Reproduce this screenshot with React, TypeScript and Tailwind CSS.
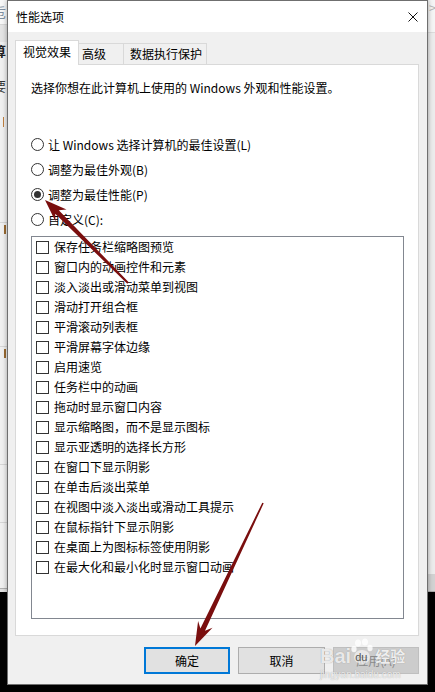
import React from "react";

const items = [
  "保存任务栏缩略图预览",
  "窗口内的动画控件和元素",
  "淡入淡出或滑动菜单到视图",
  "滑动打开组合框",
  "平滑滚动列表框",
  "平滑屏幕字体边缘",
  "启用速览",
  "任务栏中的动画",
  "拖动时显示窗口内容",
  "显示缩略图，而不是显示图标",
  "显示亚透明的选择长方形",
  "在窗口下显示阴影",
  "在单击后淡出菜单",
  "在视图中淡入淡出或滑动工具提示",
  "在鼠标指针下显示阴影",
  "在桌面上为图标标签使用阴影",
  "在最大化和最小化时显示窗口动画",
];

const radios = [
  { label: "让 Windows 选择计算机的最佳设置(L)", checked: false },
  { label: "调整为最佳外观(B)", checked: false },
  { label: "调整为最佳性能(P)", checked: true },
  { label: "自定义(C):", checked: false },
];

function Radio({ checked }: { checked: boolean }) {
  return (
    <div className="w-[13px] h-[13px] rounded-full border border-[#333333] bg-white flex items-center justify-center shrink-0">
      {checked && <div className="w-[7px] h-[7px] rounded-full bg-[#333333]" />}
    </div>
  );
}

function LeftStrip() {
  return (
    <div className="w-[7px] h-[592px] bg-[#f0f0f0] overflow-hidden flex flex-col text-[13px] leading-[16px]">
      <div className="h-[24px] bg-[#f7f7f7] flex items-center">
        <span className="-ml-[7px] text-[#7f8fa0]">卮</span>
      </div>
      <div className="h-px bg-[#d6d6d6]" />
      <div className="h-[17px] bg-[#e4e4e4]" />
      <div className="h-[18px] flex items-center">
        <span className="-ml-[7px] font-bold text-[#222]">算</span>
      </div>
      <div className="h-[18px]" />
      <div className="h-[16px] flex items-center">
        <span className="-ml-[7px] text-[#333]">要</span>
      </div>
      <div className="h-[22px]" />
      <div className="h-[12px] flex items-center">
        <span className="ml-[3px] w-px h-[10px] bg-[#c08040]" />
      </div>
      <div className="h-[94px]" />
      <div className="h-px bg-[#d6d6d6]" />
      <div className="h-[12px] flex items-center">
        <span className="ml-[4px] w-[2px] h-[9px] bg-[#9a6a30]" />
      </div>
      <div className="h-[111px]" />
      <div className="h-px bg-[#d6d6d6]" />
      <div className="h-[12px] flex items-center">
        <span className="ml-[4px] w-[2px] h-[9px] bg-[#9a6a30]" />
      </div>
      <div className="h-[105px]" />
      <div className="h-px bg-[#d6d6d6]" />
      <div className="h-[57px]" />
      <div className="h-px bg-[#d6d6d6]" />
      <div className="flex-1" />
      <div className="h-px bg-[#b0b0b0]" />
      <div className="h-[3px] bg-[#e0e0e0]" />
    </div>
  );
}

function RightStrip() {
  return (
    <div className="w-[7px] h-[592px] bg-[#ececec] overflow-hidden flex flex-col text-[13px] leading-[16px]">
      <div className="h-[32px] bg-[#f5f5f5] flex items-start">
        <span className="ml-[1px] text-[#b5b5b5]">&gt;</span>
      </div>
      <div className="h-px bg-[#dcdcdc]" />
      <div className="flex-1" />
      <div className="h-[17px] bg-[#d2d2d2]" />
      <div className="h-px bg-[#a8a8a8]" />
    </div>
  );
}

function Dialog() {
  return (
    <div className="relative z-10 w-[421px] h-[685px] border border-[#6f6f6f] bg-[#f0f0f0] flex flex-col shadow-[0_0_5px_rgba(0,0,0,0.35)]">
      {/* Title bar */}
      <div className="h-[31px] bg-white flex items-center justify-between pl-[8px] pr-[9px] shrink-0">
        <span className="leading-[16px]">性能选项</span>
        <svg width="10" height="10" viewBox="0 0 10 10" className="block">
          <path d="M0.5 0.5 L9.5 9.5 M9.5 0.5 L0.5 9.5" stroke="#111" strokeWidth="1" fill="none" />
        </svg>
      </div>

      {/* Body */}
      <div className="flex-1 flex flex-col pt-[8px] pl-[7px] pr-[8px] pb-[10px]">
        {/* Tabs */}
        <div className="h-[24px] flex items-end shrink-0">
          <div className="relative z-10 h-[25px] w-[64px] -mb-px bg-white border border-[#d9d9d9] border-b-0 flex items-center pl-[7px] pb-[2px]">
            视觉效果
          </div>
          <div className="h-[21px] w-[45px] border-t border-r border-[#d9d9d9] flex items-center pl-[3px]">
            高级
          </div>
          <div className="h-[21px] w-[83px] border-t border-r border-[#d9d9d9] flex items-center pl-[6px]">
            数据执行保护
          </div>
        </div>

        {/* Panel */}
        <div className="h-[572px] bg-white border border-[#d9d9d9] flex flex-col pl-[15px] shrink-0">
          <div className="pt-[15px] leading-[16px]">选择你想在此计算机上使用的 Windows 外观和性能设置。</div>

          <div className="mt-[36px] flex flex-col">
            {radios.map((r) => (
              <div key={r.label} className="h-[25px] flex items-center gap-[4px]">
                <Radio checked={r.checked} />
                <span className="leading-[16px]">{r.label}</span>
              </div>
            ))}
          </div>

          <div className="mt-[4px] w-[373px] h-[383px] border border-[#828790] bg-white flex flex-col pl-[4px]">
            {items.map((t) => (
              <div key={t} className="h-[20px] flex items-center gap-[5px]">
                <div className="w-[13px] h-[13px] border border-[#333333] bg-white shrink-0" />
                <span className="leading-[16px]">{t}</span>
              </div>
            ))}
          </div>
        </div>

        {/* Buttons */}
        <div className="mt-[11px] flex justify-end gap-[8px] shrink-0">
          <div className="w-[86px] h-[27px] bg-[#e1e1e1] border-2 border-[#0078d7] flex items-center justify-center">
            确定
          </div>
          <div className="w-[87px] h-[27px] bg-[#e1e1e1] border border-[#adadad] flex items-center justify-center">
            取消
          </div>
          <div className="w-[86px] h-[27px] bg-[#cccccc] border border-[#bfbfbf] flex items-center justify-center text-[#8a8a8a]">
            应用(A)
          </div>
        </div>
      </div>
    </div>
  );
}

function Arrows() {
  return (
    <svg className="absolute inset-0 z-20 pointer-events-none" width="435" height="692" viewBox="0 0 435 692">
      <polygon
        points="45,200 66.5,209.5 58.8,210.2 128.7,282.3 127.3,283.7 55.2,213.8 55.5,221.5"
        fill="#7a0e0e"
      />
      <polygon
        points="195,646 212.5,627.7 205,630.8 263.7,503.3 262.3,502.7 200.4,628.6 198.1,620.9"
        fill="#7a0e0e"
      />
    </svg>
  );
}

function Watermark() {
  return (
    <div className="absolute z-30 left-[320px] top-[638px] w-[95px] h-[44px] pointer-events-none flex flex-col">
      <div className="h-[28px] flex items-end">
        <span className="text-[20px] leading-[20px] font-bold text-white/80 font-['Liberation_Sans',sans-serif] [text-shadow:0_0_1px_#8a8a8a]">
          Bai
        </span>
        <div className="relative w-[24px] h-[28px]">
          <svg width="24" height="28" viewBox="0 0 24 28" className="absolute inset-0">
            <ellipse cx="7" cy="5" rx="3" ry="3.6" fill="white" fillOpacity="0.8" />
            <ellipse cx="14" cy="4" rx="3" ry="3.6" fill="white" fillOpacity="0.8" />
            <ellipse cx="3" cy="11" rx="2.6" ry="3.2" fill="white" fillOpacity="0.8" />
            <ellipse cx="19" cy="10" rx="2.6" ry="3.2" fill="white" fillOpacity="0.8" />
            <ellipse cx="11" cy="19" rx="8" ry="7" fill="white" fillOpacity="0.55" />
          </svg>
          <span className="absolute left-[4px] top-[12px] text-[11px] leading-[14px] text-[#555] font-['Liberation_Sans',sans-serif]">
            du
          </span>
        </div>
        <span className="text-[15px] leading-[20px] text-white/85 font-bold [text-shadow:0_0_1px_#8a8a8a]">经验</span>
      </div>
      <div className="mt-[3px] text-[10px] leading-[11px] text-white/75 font-['Liberation_Sans',sans-serif] [text-shadow:0_0_1px_#9a9a9a]">
        jingyan.baidu.com
      </div>
    </div>
  );
}

export default function App() {
  return (
    <div className="relative w-[435px] h-[692px] overflow-hidden bg-black text-[12px] text-black font-['Microsoft_YaHei','Noto_Sans_CJK_SC',sans-serif]">
      <div className="flex items-start">
        <LeftStrip />
        <Dialog />
        <RightStrip />
      </div>
      <Arrows />
      <Watermark />
    </div>
  );
}
